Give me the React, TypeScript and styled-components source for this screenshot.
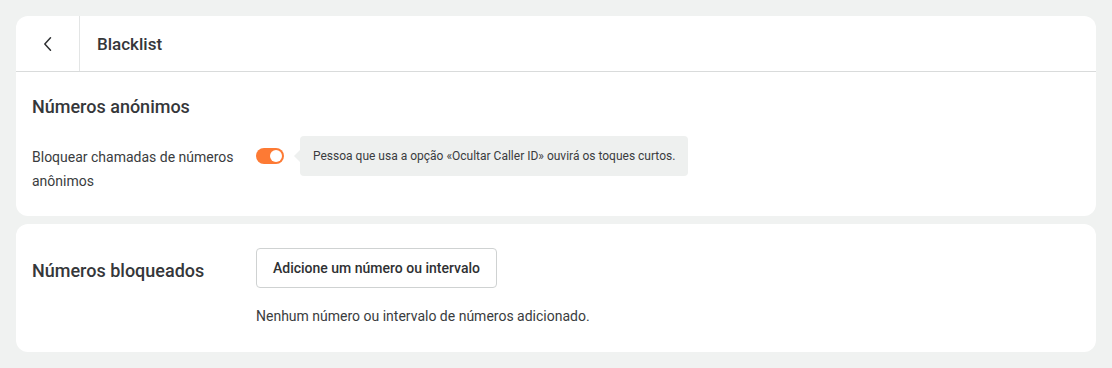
import React, { useState } from 'react'
import styled, { createGlobalStyle } from 'styled-components'

const GlobalStyle = createGlobalStyle`
  * {
    box-sizing: border-box;
  }
  body {
    margin: 0;
    background: #f0f2f1;
    font-family: Roboto, 'Liberation Sans', sans-serif;
    color: #2f3133;
  }
`

export default function App() {
  const [blocked, setBlocked] = useState(true)

  return (
    <>
      <GlobalStyle />
      <Page>
        <Card>
          <Header>
            <BackButton aria-label="Voltar">
              <svg width="16" height="16" viewBox="0 0 16 16" fill="none">
                <path d="M10.5 1.8L4.8 8l5.7 6.2" stroke="#2f3133" strokeWidth="1.5" strokeLinecap="round" strokeLinejoin="round" />
              </svg>
            </BackButton>
            <Title>Blacklist</Title>
          </Header>
          <Body>
            <SectionTitle>Números anónimos</SectionTitle>
            <Row>
              <Label>Bloquear chamadas de números anônimos</Label>
              <Control>
                <Toggle $on={blocked} onClick={() => setBlocked(!blocked)} />
                <Hint>Pessoa que usa a opção «Ocultar Caller ID» ouvirá os toques curtos.</Hint>
              </Control>
            </Row>
          </Body>
        </Card>
        <Card>
          <BlockedBody>
            <SideTitle>Números bloqueados</SideTitle>
            <Column>
              <AddButton>Adicione um número ou intervalo</AddButton>
              <Empty>Nenhum número ou intervalo de números adicionado.</Empty>
            </Column>
          </BlockedBody>
        </Card>
      </Page>
    </>
  )
}

const Page = styled.div`
  display: flex;
  flex-direction: column;
  gap: 8px;
  padding: 16px;
`
const Card = styled.section`
  background: #fff;
  border-radius: 12px;
`
const Header = styled.header`
  display: flex;
  align-items: stretch;
  height: 56px;
  border-bottom: 1px solid #d9dbdb;
`
const BackButton = styled.button`
  width: 64px;
  display: flex;
  align-items: center;
  justify-content: center;
  background: none;
  border: none;
  border-right: 1px solid #e3e5e5;
  padding: 0;
  cursor: pointer;
`
const Title = styled.h1`
  margin: 0;
  padding-left: 17px;
  display: flex;
  align-items: center;
  font-size: 17px;
  font-weight: 500;
  color: #35373a;
`
const Body = styled.div`
  padding: 23px 16px 23px;
`
const SectionTitle = styled.h2`
  margin: 0;
  font-size: 18px;
  line-height: 24px;
  font-weight: 500;
  color: #35373a;
`
const Row = styled.div`
  display: grid;
  grid-template-columns: 224px 1fr;
  margin-top: 17px;
`
const Label = styled.div`
  font-size: 14px;
  line-height: 24px;
  padding-top: 9px;
  padding-right: 20px;
  color: #3a3c3e;
`
const Control = styled.div`
  display: flex;
  align-items: center;
  align-self: start;
  gap: 16px;
`
const Toggle = styled.button<{ $on: boolean }>`
  position: relative;
  width: 28px;
  height: 16px;
  border-radius: 8px;
  border: none;
  padding: 0;
  cursor: pointer;
  background: ${({ $on }) => ($on ? '#fd7a34' : '#c8cbcb')};

  &::after {
    content: '';
    position: absolute;
    top: 2px;
    left: ${({ $on }) => ($on ? '14px' : '2px')};
    width: 12px;
    height: 12px;
    border-radius: 50%;
    background: #fff;
  }
`
const Hint = styled.div`
  position: relative;
  background: #eef0ef;
  border-radius: 4px;
  padding: 0 13px;
  height: 40px;
  display: flex;
  align-items: center;
  font-size: 12px;
  color: #3a3c3e;

  &::before {
    content: '';
    position: absolute;
    left: -6px;
    top: 14px;
    border-top: 6px solid transparent;
    border-bottom: 6px solid transparent;
    border-right: 6px solid #eef0ef;
  }
`
const BlockedBody = styled.div`
  display: grid;
  grid-template-columns: 224px 1fr;
  padding: 24px 16px 24px;
`
const SideTitle = styled.h2`
  margin: 0;
  font-size: 18px;
  line-height: 24px;
  font-weight: 500;
  color: #35373a;
  padding-top: 11px;
`
const Column = styled.div`
  display: flex;
  flex-direction: column;
  align-items: flex-start;
  gap: 16px;
`
const AddButton = styled.button`
  height: 40px;
  padding: 0 16px;
  background: #fff;
  border: 1px solid #cfd2d2;
  border-radius: 4px;
  font-family: Roboto, 'Liberation Sans', sans-serif;
  font-size: 14px;
  font-weight: 500;
  color: #2f3133;
  cursor: pointer;
`
const Empty = styled.p`
  margin: 0;
  font-size: 14px;
  line-height: 24px;
  color: #3a3c3e;
`
